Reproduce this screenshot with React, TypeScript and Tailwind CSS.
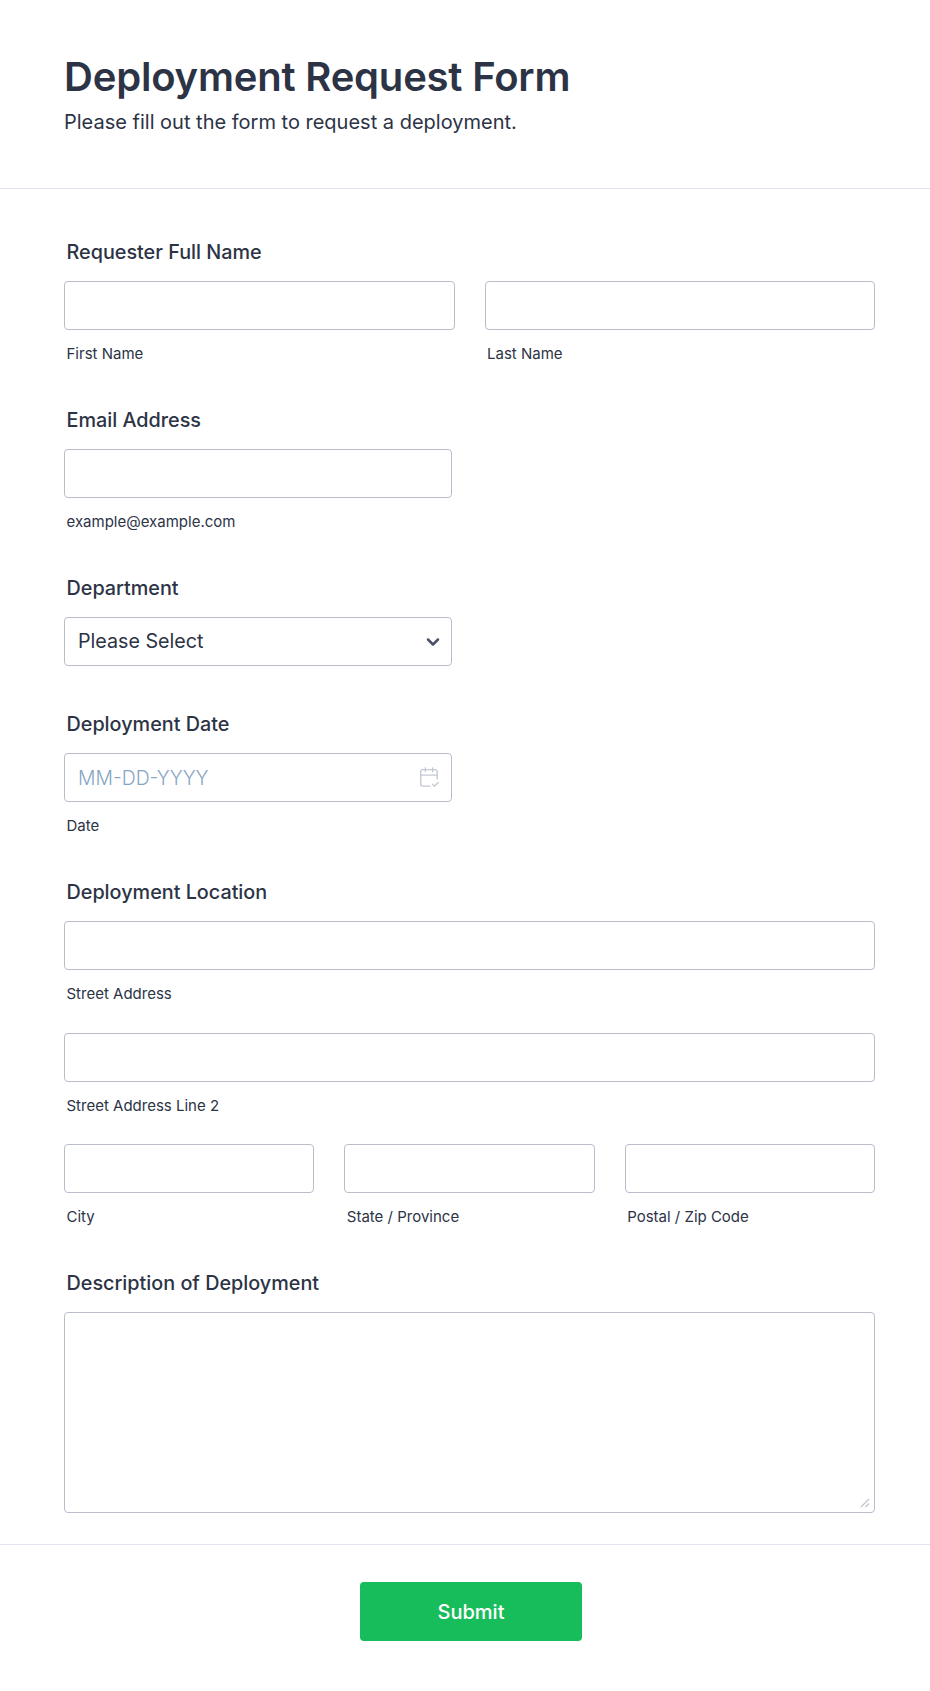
import {CalendarCheck2, ChevronDown} from 'lucide-react'

const inputClass =
  'block h-[49px] w-full rounded border border-[#b8bdc9] bg-white px-[13px] text-[19.7px] text-[#2c3345] outline-none'

function Label({children}: {children: React.ReactNode}) {
  return (
    <label className="mb-[17px] ml-[2.5px] block h-[24px] text-[19.8px] leading-[24px] font-medium text-[#2c3345]">
      {children}
    </label>
  )
}

function Sub({children}: {children: React.ReactNode}) {
  return <p className="mt-[15px] ml-[2.5px] h-[17px] text-[15px] leading-[18px] text-[#2c3345]">{children}</p>
}

function TextField({sub, className = ''}: {sub: string; className?: string}) {
  return (
    <div className={className}>
      <input type="text" className={inputClass} />
      <Sub>{sub}</Sub>
    </div>
  )
}

export default function App() {
  return (
    <div className="min-h-[1691px] bg-white font-['Inter',sans-serif] text-[#2c3345]">
      <header className="h-[189px] border-b border-[#e3e5ee] px-[64px] pt-[50px]">
        <h1 className="text-[40px] leading-[54px] font-semibold tracking-[-0.2px]">Deployment Request Form</h1>
        <p className="mt-[4px] text-[20px] leading-[28px]">Please fill out the form to request a deployment.</p>
      </header>

      <main className="pt-[51px] pr-[55px] pl-[64px]">
        <section className="mb-[46px]">
          <Label>Requester Full Name</Label>
          <div className="grid grid-cols-2 gap-[30px]">
            <TextField sub="First Name" />
            <TextField sub="Last Name" />
          </div>
        </section>

        <section className="mb-[46px] w-[388px]">
          <Label>Email Address</Label>
          <TextField sub="example@example.com" />
        </section>

        <section className="mb-[46px] w-[388px]">
          <Label>Department</Label>
          <div className={`${inputClass} flex items-center justify-between pr-[8px]`}>
            <span className="pt-[1px]">Please Select</span>
            <ChevronDown size={20} strokeWidth={3} className="text-[#4b5268]" />
          </div>
        </section>

        <section className="mb-[46px] w-[388px]">
          <Label>Deployment Date</Label>
          <div className="relative">
            <input
              type="text"
              placeholder="MM-DD-YYYY"
              className={`${inputClass} font-light placeholder:text-[19.4px] placeholder:text-[#86a5c4]`}
            />
            <CalendarCheck2
              size={22}
              strokeWidth={1.5}
              className="absolute top-[13px] right-[12px] text-[#c5c9d3]"
            />
          </div>
          <Sub>Date</Sub>
        </section>

        <section className="mb-[46px]">
          <Label>Deployment Location</Label>
          <TextField sub="Street Address" className="mb-[31px]" />
          <TextField sub="Street Address Line 2" className="mb-[30px]" />
          <div className="grid grid-cols-3 gap-[30px]">
            <TextField sub="City" />
            <TextField sub="State / Province" />
            <TextField sub="Postal / Zip Code" />
          </div>
        </section>

        <section>
          <Label>Description of Deployment</Label>
          <div className="relative">
            <textarea className="block h-[201px] w-full resize-none rounded border border-[#b8bdc9] bg-white px-[13px] py-2 outline-none" />
            {/* resize grip */}
            <svg
              width="10"
              height="10"
              viewBox="0 0 10 10"
              className="absolute right-[5px] bottom-[5px] text-[#c4c6d1]"
              fill="none"
              stroke="currentColor"
              strokeWidth="1.3"
            >
              <path d="M1 9 9 1M5.5 9 9 5.5" />
            </svg>
          </div>
        </section>
      </main>

      <footer className="mt-[31px] flex justify-center border-t border-[#e3e5ee] pt-[37px] pl-[12px]">
        <button className="h-[59px] w-[222px] rounded bg-[#18bd5b] text-[20px] font-medium text-white">Submit</button>
      </footer>
    </div>
  )
}
